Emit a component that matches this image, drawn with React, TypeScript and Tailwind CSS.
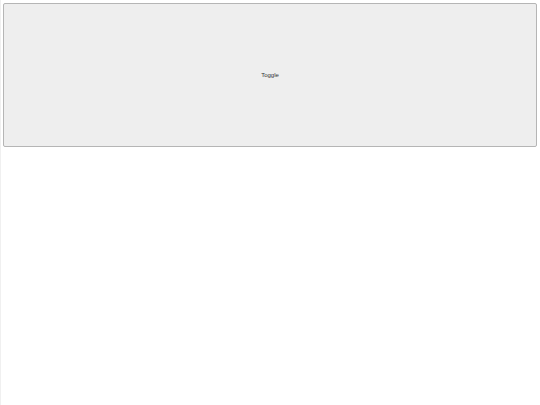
export default function App() {
  return (
    <div className="h-[405px] w-[540px] border-l border-[#f0f0f0] bg-white" style={{ fontFamily: '"Liberation Sans", Arial, sans-serif' }}>
      <div className="ml-[2px] pt-[3px]">
        <button className="flex h-[144px] w-[534px] items-center justify-center rounded-[2px] border border-[#b5b5b5] bg-[#eeeeee] pt-[1px] text-[6px] text-[#333]">
          Toggle
        </button>
      </div>
    </div>
  );
}
